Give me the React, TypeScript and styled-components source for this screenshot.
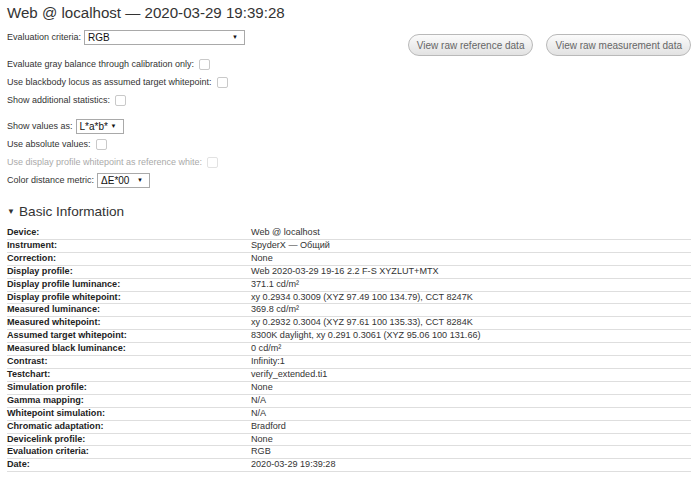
import * as React from 'react';
import styled, { createGlobalStyle } from 'styled-components';

const GlobalStyle = createGlobalStyle`
  html, body {
    margin: 0;
    padding: 0;
    background: #fff;
  }
  body {
    font-family: "Liberation Sans", Arial, sans-serif;
    color: #333;
  }
`;

const Page = styled.div`
  padding: 0 9px 0 7px;
  font-size: 9px;
`;

const Title = styled.h1`
  margin: 0;
  padding-top: 4px;
  height: 18px;
  line-height: 18px;
  font-size: 15.1px;
  font-weight: normal;
  color: #333;
  white-space: nowrap;
`;

const Top = styled.div`
  display: flex;
  justify-content: space-between;
  align-items: flex-start;
  margin-top: 6px;
`;

const Controls = styled.div`
  display: flex;
  flex-direction: column;
`;

const Group = styled.div<{ $gap?: number }>`
  display: flex;
  flex-direction: column;
  margin-bottom: ${({ $gap }) => $gap ?? 0}px;
`;

const Row = styled.label<{ $disabled?: boolean }>`
  display: flex;
  align-items: center;
  gap: 3px;
  height: 18px;
  white-space: nowrap;
  color: ${({ $disabled }) => ($disabled ? '#aaa' : '#333')};
`;

const Check = styled.span<{ $disabled?: boolean }>`
  display: inline-block;
  width: 9px;
  height: 9px;
  margin-left: 2px;
  border: 1px solid ${({ $disabled }) => ($disabled ? '#e2e2e2' : '#c9c9c9')};
  border-radius: 2px;
  background: #fff;
`;

const Select = styled.span<{ $width: number }>`
  display: inline-flex;
  align-items: center;
  justify-content: space-between;
  box-sizing: border-box;
  width: ${({ $width }) => $width}px;
  height: 15px;
  padding: 0 6px 0 3px;
  border: 1px solid #a9a9a9;
  background: #fff;
  color: #111;
  font-size: 10px;
`;

const Arrow = styled.span`
  font-size: 6px;
  color: #111;
`;

const Buttons = styled.div`
  display: flex;
  gap: 13px;
  margin-top: 6px;
`;

const RawButton = styled.button`
  height: 22px;
  padding: 0 8px;
  border: 1px solid #b9b9b9;
  border-radius: 11px;
  background: linear-gradient(#fbfbfb, #e2e2e2);
  color: #666;
  font-family: "Liberation Sans", Arial, sans-serif;
  font-size: 10px;
  white-space: nowrap;
  cursor: pointer;
`;

const Heading = styled.h2`
  display: flex;
  align-items: center;
  gap: 4px;
  margin: 12px 0 6px;
  height: 20px;
  font-size: 13.6px;
  font-weight: normal;
  color: #333;
`;

const Caret = styled.span`
  font-size: 8px;
  width: 8px;
`;

const InfoTable = styled.table`
  width: 100%;
  border-collapse: collapse;
  font-size: 9.1px;
`;

const Cell = styled.td<{ $label?: boolean }>`
  padding: 0;
  height: 11.9px;
  line-height: 11.9px;
  border-bottom: 1px solid #dedede;
  white-space: nowrap;
  width: ${({ $label }) => ($label ? '244px' : 'auto')};
  font-weight: ${({ $label }) => ($label ? 'bold' : 'normal')};
  color: ${({ $label }) => ($label ? '#222' : '#333')};
`;

const info: [string, string][] = [
  ['Device:', 'Web @ localhost'],
  ['Instrument:', 'SpyderX — Общий'],
  ['Correction:', 'None'],
  ['Display profile:', 'Web 2020-03-29 19-16 2.2 F-S XYZLUT+MTX'],
  ['Display profile luminance:', '371.1 cd/m²'],
  ['Display profile whitepoint:', 'xy 0.2934 0.3009 (XYZ 97.49 100 134.79), CCT 8247K'],
  ['Measured luminance:', '369.8 cd/m²'],
  ['Measured whitepoint:', 'xy 0.2932 0.3004 (XYZ 97.61 100 135.33), CCT 8284K'],
  ['Assumed target whitepoint:', '8300K daylight, xy 0.291 0.3061 (XYZ 95.06 100 131.66)'],
  ['Measured black luminance:', '0 cd/m²'],
  ['Contrast:', 'Infinity:1'],
  ['Testchart:', 'verify_extended.ti1'],
  ['Simulation profile:', 'None'],
  ['Gamma mapping:', 'N/A'],
  ['Whitepoint simulation:', 'N/A'],
  ['Chromatic adaptation:', 'Bradford'],
  ['Devicelink profile:', 'None'],
  ['Evaluation criteria:', 'RGB'],
  ['Date:', '2020-03-29 19:39:28'],
];

const App = () => {
  return (
    <Page>
      <GlobalStyle />
      <Title>Web @ localhost — 2020-03-29 19:39:28</Title>
      <Top>
        <Controls>
          <Group $gap={9}>
            <Row>
              Evaluation criteria:
              <Select $width={161}>
                RGB <Arrow>▼</Arrow>
              </Select>
            </Row>
          </Group>
          <Group $gap={8}>
            <Row>
              Evaluate gray balance through calibration only: <Check />
            </Row>
            <Row>
              Use blackbody locus as assumed target whitepoint: <Check />
            </Row>
            <Row>
              Show additional statistics: <Check />
            </Row>
          </Group>
          <Group>
            <Row>
              Show values as:
              <Select $width={48}>
                L*a*b* <Arrow>▼</Arrow>
              </Select>
            </Row>
            <Row>
              Use absolute values: <Check />
            </Row>
            <Row $disabled>
              Use display profile whitepoint as reference white: <Check $disabled />
            </Row>
            <Row>
              Color distance metric:
              <Select $width={53}>
                ΔE*00 <Arrow>▼</Arrow>
              </Select>
            </Row>
          </Group>
        </Controls>
        <Buttons>
          <RawButton>View raw reference data</RawButton>
          <RawButton>View raw measurement data</RawButton>
        </Buttons>
      </Top>
      <Heading>
        <Caret>▼</Caret>
        Basic Information
      </Heading>
      <InfoTable>
        <tbody>
          {info.map(([label, value]) => (
            <tr key={label}>
              <Cell $label>{label}</Cell>
              <Cell>{value}</Cell>
            </tr>
          ))}
        </tbody>
      </InfoTable>
    </Page>
  );
};

export default App;
